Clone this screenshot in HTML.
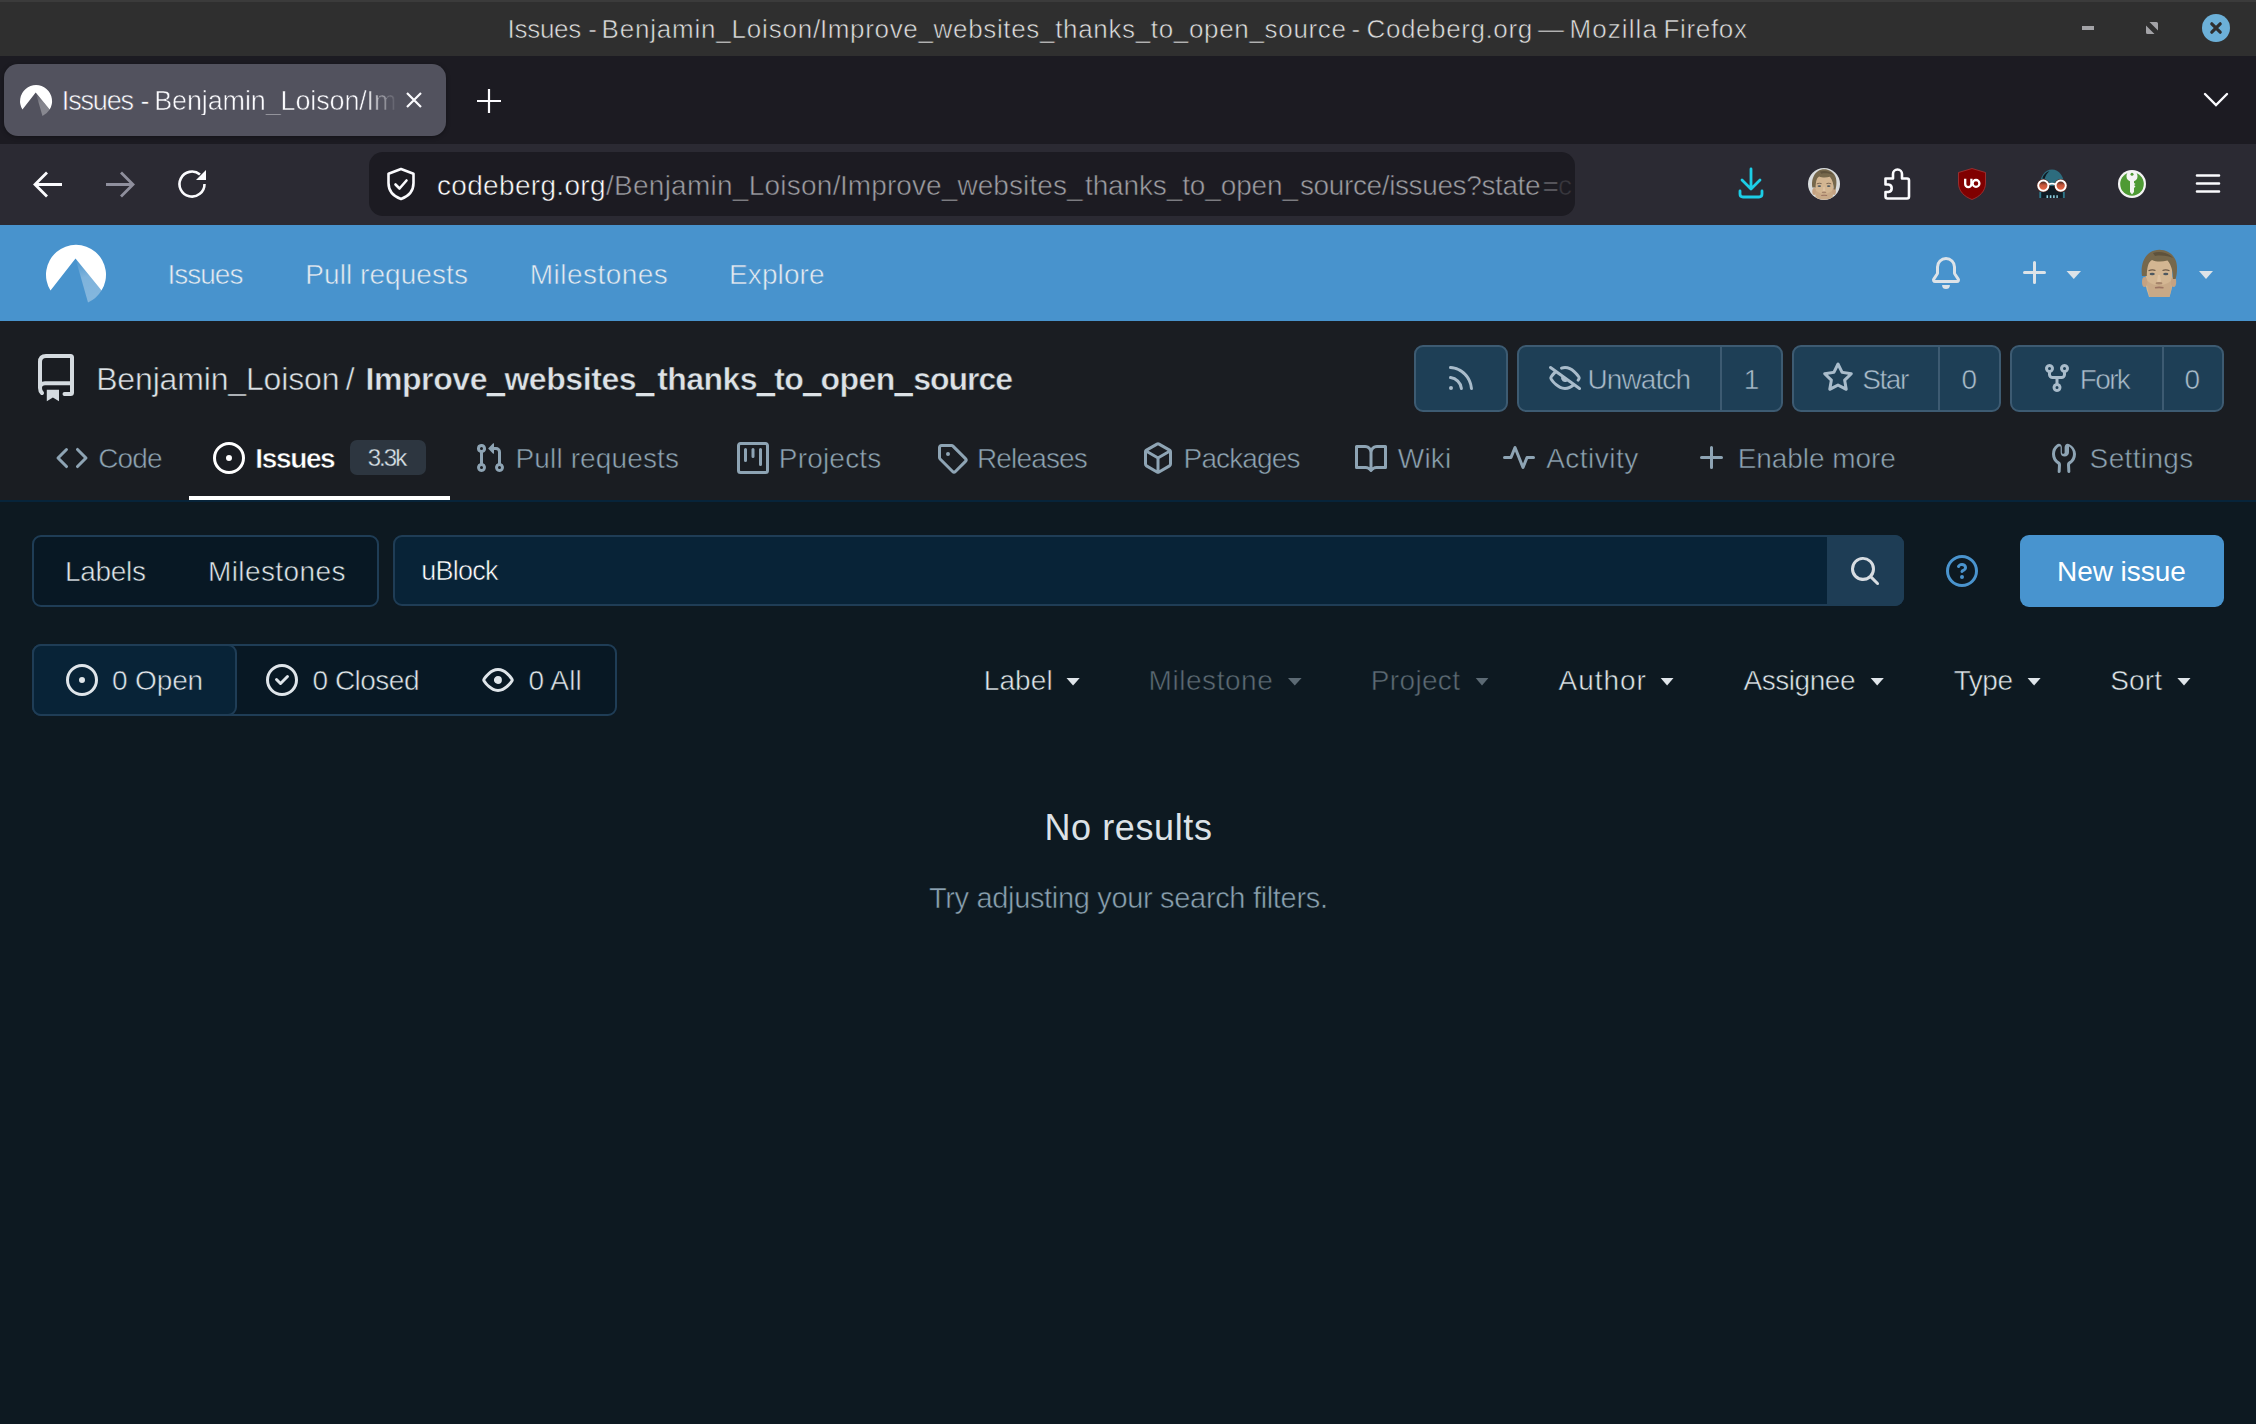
<!DOCTYPE html>
<html><head><meta charset="utf-8"><title>Issues - Benjamin_Loison/Improve_websites_thanks_to_open_source - Codeberg.org</title>
<style>
html,body{margin:0;padding:0;width:2256px;height:1424px;overflow:hidden;background:#0d1921;font-family:"Liberation Sans",sans-serif;}
.a{position:absolute;box-sizing:border-box;}
.t{position:absolute;white-space:pre;font-family:"Liberation Sans",sans-serif;}
svg{position:absolute;overflow:visible;}
</style></head><body>
<!-- window title bar -->
<div class="a" style="left:0;top:0;width:2256px;height:56px;background:#2f2f2f;border-top:2px solid #3b3b3b;"></div>
<div class="a" style="left:2082px;top:26px;width:12px;height:4px;background:#a3a3a7;"></div>
<!-- tab strip -->
<div class="a" style="left:0;top:56px;width:2256px;height:88px;background:#1c1b22;"></div>
<div class="a" style="left:4px;top:64px;width:442px;height:72px;background:#52525e;border-radius:14px;box-shadow:0 1px 4px rgba(0,0,0,.35);"></div>
<!-- nav toolbar -->
<div class="a" style="left:0;top:144px;width:2256px;height:81px;background:#2b2a33;"></div>
<div class="a" style="left:369px;top:152px;width:1206px;height:64px;background:#1c1b22;border-radius:14px;"></div>
<!-- codeberg navbar -->
<div class="a" style="left:0;top:225px;width:2256px;height:96px;background:#4893cd;"></div>
<!-- repo header -->
<div class="a" style="left:0;top:321px;width:2256px;height:181px;background:#1a1d22;border-bottom:2px solid #07243a;"></div>
<!-- buttons -->
<div class="a" style="left:1414px;top:345px;width:94px;height:67px;background:#1e3f56;border:2px solid #3d5b72;border-radius:9px;"></div>
<div class="a" style="left:1517px;top:345px;width:266px;height:67px;background:#1e3f56;border:2px solid #3d5b72;border-radius:9px;"></div>
<div class="a" style="left:1720px;top:347px;width:2px;height:63px;background:#3d5b72;"></div>
<div class="a" style="left:1792px;top:345px;width:209px;height:67px;background:#1e3f56;border:2px solid #3d5b72;border-radius:9px;"></div>
<div class="a" style="left:1938px;top:347px;width:2px;height:63px;background:#3d5b72;"></div>
<div class="a" style="left:2010px;top:345px;width:214px;height:67px;background:#1e3f56;border:2px solid #3d5b72;border-radius:9px;"></div>
<div class="a" style="left:2162px;top:347px;width:2px;height:63px;background:#3d5b72;"></div>
<!-- tab badge + underline -->
<div class="a" style="left:350px;top:440px;width:76px;height:35px;background:#2d3640;border-radius:7px;"></div>
<div class="a" style="left:189px;top:496px;width:261px;height:4px;background:#ffffff;"></div>
<!-- labels/milestones group -->
<div class="a" style="left:32px;top:535px;width:347px;height:72px;background:#081824;border:2px solid #1f3d56;border-radius:9px;"></div>
<!-- search -->
<div class="a" style="left:393px;top:535px;width:1511px;height:71px;background:#082337;border:2px solid #1f3d56;border-radius:9px;"></div>
<div class="a" style="left:1827px;top:535px;width:77px;height:71px;background:#1e3d55;border-radius:0 9px 9px 0;"></div>
<!-- new issue -->
<div class="a" style="left:2020px;top:535px;width:204px;height:72px;background:#4894cf;border-radius:9px;"></div>
<!-- state group -->
<div class="a" style="left:32px;top:644px;width:585px;height:72px;background:#081824;border:2px solid #1f3d56;border-radius:9px;"></div>
<div class="a" style="left:32px;top:644px;width:205px;height:72px;background:#082337;border:2px solid #1f3d56;border-radius:9px;"></div>
<svg style="left:0;top:0" width="2256" height="1424" viewBox="0 0 2256 1424"><path fill="#a3a3a7" d="M2149.5,22 H2156.5 Q2158,22 2158,23.5 V30.5 Z M2146,25.5 L2154.5,34 H2147.5 Q2146,34 2146,32.5 Z"/><circle cx="2216" cy="28" r="14" fill="#6cb0d8"/><path stroke="#2f2f2f" stroke-width="3.2" stroke-linecap="round" d="M2211.8,23.8 L2220.2,32.2 M2220.2,23.8 L2211.8,32.2"/><defs><linearGradient id="wg1" gradientUnits="userSpaceOnUse" x1="35.70" y1="92.47" x2="42.46" y2="115.88"><stop offset="0" stop-color="#ffffff" stop-opacity="0"/><stop offset=".45" stop-color="#ffffff" stop-opacity="0.28800000000000003"/><stop offset="1" stop-color="#ffffff" stop-opacity="0.32"/></linearGradient></defs><path fill="#ffffff" d="M22.46,109.53 L35.70,92.47 L49.66,109.53 A16 16 0 1 0 22.46,109.53 Z"/><path fill="url(#wg1)" d="M35.70,92.47 L49.66,109.53 A16 16 0 0 1 42.46,115.88 Z"/><path stroke="#fbfbfe" stroke-width="2.2" stroke-linecap="butt" d="M407,93 L421,107 M421,93 L407,107"/><path stroke="#fbfbfe" stroke-width="2.2" d="M477,101 H501 M489,89 V113"/><path fill="none" stroke="#fbfbfe" stroke-width="2.4" stroke-linecap="round" d="M2205,94 L2216,105 L2227,94"/><path fill="none" stroke="#fbfbfe" stroke-width="2.8" d="M35,184.5 H62 M47,172.5 L35,184.5 L47,196.5"/><path fill="none" stroke="#8f8f9d" stroke-width="2.8" d="M106,184.5 H133 M121,172.5 L133,184.5 L121,196.5"/><path fill="none" stroke="#fbfbfe" stroke-width="2.6" d="M204.5,184 A12.5 12.5 0 1 1 200,174.5"/><path fill="#fbfbfe" d="M206,170 V180 H196 Z"/><path fill="none" stroke="#fbfbfe" stroke-width="2.6" stroke-linejoin="round" d="M401,169 L413.5,173.8 V183 C413.5,191.5 408,196.5 401,199 C394,196.5 388.5,191.5 388.5,183 V173.8 Z"/><path fill="none" stroke="#fbfbfe" stroke-width="2.6" stroke-linecap="round" stroke-linejoin="round" d="M395.5,184.5 L399.5,188.5 L406.5,180.5"/><path fill="none" stroke="#1ccde6" stroke-width="2.8" stroke-linecap="round" stroke-linejoin="round" d="M1751,169 V189 M1742,180 L1751,189 L1760,180 M1740,191 V194 Q1740,197 1743,197 H1759 Q1762,197 1762,194 V191"/><path fill="none" stroke="#fbfbfe" stroke-width="2.6" stroke-linejoin="round" d="M1885.5,178.5 H1893 V174 A4.5 4.5 0 0 1 1902,174 V178.5 H1907 Q1909,178.5 1909,180.5 V196.5 Q1909,198.5 1907,198.5 H1887.5 Q1885.5,198.5 1885.5,196.5 V192 H1888.5 A3.8 3.8 0 0 0 1888.5,184.5 H1885.5 Z"/><path fill="#800000" stroke="#a33" stroke-width="0.8" d="M1972,168.5 L1985.5,172.5 V183 C1985.5,191 1980,196.5 1972,199.5 C1964,196.5 1958.5,191 1958.5,183 V172.5 Z"/><path fill="none" stroke="#fff" stroke-width="2.3" d="M1965.2,178.8 V184 A3.1 3.1 0 0 0 1971.4,184 V178.8"/><circle cx="1976" cy="183.4" r="3.4" fill="none" stroke="#fff" stroke-width="2.3"/><defs><linearGradient id="lens" x1="0" y1="0" x2="0" y2="1"><stop offset="0" stop-color="#2a1a18"/><stop offset=".45" stop-color="#c4553a"/><stop offset="1" stop-color="#ec6a48"/></linearGradient></defs><path fill="#2d6c7e" d="M2039.3,190 C2039.3,176 2045,169.6 2052,169.6 C2059,169.6 2064.8,176 2064.8,190 Z"/><path fill="#0e1a22" d="M2042.3,178.5 C2043.5,174.5 2046,172 2049.5,171 C2047,173.2 2045.5,175.8 2044.5,179 Z"/><path fill="#101c25" d="M2041,186 H2063 V198 H2041 Z"/><path fill="#2f7689" d="M2039.3,191.8 H2041.2 V198 H2039.3 Z M2062.9,191.8 H2064.8 V198 H2062.9 Z"/><circle cx="2043.3" cy="185.6" r="6.6" fill="#5b2418"/><circle cx="2060.7" cy="185.6" r="6.6" fill="#5b2418"/><circle cx="2043.3" cy="185.6" r="5.1" fill="url(#lens)" stroke="#fff" stroke-width="1.9"/><circle cx="2060.7" cy="185.6" r="5.1" fill="url(#lens)" stroke="#fff" stroke-width="1.9"/><path stroke="#fff" stroke-width="1.7" d="M2048.6,184.3 Q2052,182.8 2055.4,184.3"/><path stroke="#8fd0e0" stroke-width="2.6" d="M2046.5,196.6 H2057.8" stroke-dasharray="1.6 1.7"/><circle cx="2132" cy="184" r="14" fill="#f4f4f4"/><circle cx="2132" cy="184" r="11.8" fill="#4e9a34"/><path fill="#f4f4f4" d="M2126.5,176.5 C2126.5,172.5 2129,170.8 2132,170.8 C2135,170.8 2137.5,172.5 2137.5,176.5 C2137.5,179 2136,180.5 2134,181.3 V183 L2135.5,184 L2134,185 L2135.5,186.5 L2134,188 V192 L2132,194.5 L2130,192 V181.3 C2128,180.5 2126.5,179 2126.5,176.5 Z"/><circle cx="2132" cy="174.2" r="1.5" fill="#4e9a34"/><path stroke="#fbfbfe" stroke-width="2.6" stroke-linecap="round" d="M2197,175.5 H2219 M2197,183.5 H2219 M2197,191.5 H2219"/><defs><linearGradient id="wg2" gradientUnits="userSpaceOnUse" x1="75.50" y1="258.61" x2="88.00" y2="302.50"><stop offset="0" stop-color="#ffffff" stop-opacity="0"/><stop offset=".45" stop-color="#ffffff" stop-opacity="0.29700000000000004"/><stop offset="1" stop-color="#ffffff" stop-opacity="0.33"/></linearGradient></defs><path fill="#ffffff" d="M50.50,290.59 L75.50,258.61 L101.50,290.59 A30 30 0 1 0 50.50,290.59 Z"/><path fill="url(#wg2)" d="M75.50,258.61 L101.50,290.59 A30 30 0 0 1 88.00,302.50 Z"/><polygon fill="#dde3e8" points="2066.5,271 2081,271 2073.75,279"/><polygon fill="#dde3e8" points="2199,271 2213,271 2206,279"/><path fill="none" stroke="#d5dbe0" stroke-width="4" stroke-linecap="round" stroke-linejoin="round" d="M42,393 C40.6,391.6 40,390 40,388 V362 Q40,356 46,356 H70.5 Q72,356 72,357.5 V392.5 Q72,394 70.5,394 H64.5 M40,388 Q40,383.3 45,383.3 H72"/><path fill="#d5dbe0" d="M46.8,389.8 H59 V401.2 L52.9,397.4 L46.8,401.2 Z"/><polygon fill="#dfe5ea" points="1066.5,678 1079.7,678 1073.1,685.5"/><polygon fill="#5c6a74" points="1288,678 1301.6,678 1294.8,685.5"/><polygon fill="#5c6a74" points="1475.7,678 1488.4,678 1482,685.5"/><polygon fill="#dfe5ea" points="1660.7,678 1673.5,678 1667.1,685.5"/><polygon fill="#dfe5ea" points="1870.7,678 1883.8,678 1877.2,685.5"/><polygon fill="#dfe5ea" points="2027.6,678 2040.6,678 2034.1,685.5"/><polygon fill="#dfe5ea" points="2177.4,678 2190.5,678 2184,685.5"/></svg>
<svg style="left:1808px;top:168px" width="32" height="32" viewBox="0 0 32 32"><defs><clipPath id="avc"><circle cx="16" cy="16" r="15.6"/></clipPath></defs><circle cx="16" cy="16" r="16" fill="#d9dcdd"/><g clip-path="url(#avc)"><g transform="translate(3.6,0.8) scale(0.69)"><path d="M5,14 C5,9 10,7 18,7 C27,7 31,10 31,15 L31.5,33 C31.5,39 29.5,44 28.5,48 L8,48 C7,44 4.5,39 4.5,33 Z" fill="#d3b692"/><path d="M5,30 C6,38 8,44 8.5,48 L28.5,48 C29.5,44 31,38 31.5,30 C28,34 24,36 18,36 C12,36 8,34 5,30 Z" fill="#c6a684" opacity=".8"/><ellipse cx="3.6" cy="33" rx="2.6" ry="5" fill="#c4a282"/><ellipse cx="32.6" cy="33" rx="2.6" ry="5" fill="#c4a282"/><path d="M1,27 C-0.5,17 2.5,8 9,3.5 C13,0.8 18,0 23,1.2 C31,3.5 36.5,10 36,20 C36,24 35.5,27 34.6,30 L32,30 C32,23 30.5,16 26.5,11.5 C21,13 15,13 11,11 C7,13 6,19 5.8,27 Z" fill="#76684c"/><path d="M12,4 C18,2 27,3 32,9 C28,7 21,6 14,7 Z" fill="#5e523c"/><path d="M7.5,21.8 Q11,20.2 14.5,21.5 M21.5,21.5 Q25,20.2 28.5,21.8" stroke="#6d5a48" stroke-width="1.2" fill="none"/><ellipse cx="11.2" cy="25" rx="2.6" ry="1.3" fill="#4d5860"/><ellipse cx="24.8" cy="25" rx="2.6" ry="1.3" fill="#4d5860"/><path d="M17,26 L16,32.5 Q18,33.5 20,32.5 L19,26 Z" fill="#e2c8a6" opacity=".7"/><ellipse cx="18" cy="34.2" rx="3.4" ry="1.2" fill="#8d6c56" opacity=".65"/><path d="M14,38.8 Q18,38 22.5,38.8" stroke="#9c7462" stroke-width="1.6" fill="none"/></g></g></svg>
<svg style="left:2141px;top:249px" width="36" height="48" viewBox="0 0 36 48"><path d="M5,14 C5,9 10,7 18,7 C27,7 31,10 31,15 L31.5,33 C31.5,39 29.5,44 28.5,48 L8,48 C7,44 4.5,39 4.5,33 Z" fill="#d3b692"/><path d="M5,30 C6,38 8,44 8.5,48 L28.5,48 C29.5,44 31,38 31.5,30 C28,34 24,36 18,36 C12,36 8,34 5,30 Z" fill="#c6a684" opacity=".8"/><ellipse cx="3.6" cy="33" rx="2.6" ry="5" fill="#c4a282"/><ellipse cx="32.6" cy="33" rx="2.6" ry="5" fill="#c4a282"/><path d="M1,27 C-0.5,17 2.5,8 9,3.5 C13,0.8 18,0 23,1.2 C31,3.5 36.5,10 36,20 C36,24 35.5,27 34.6,30 L32,30 C32,23 30.5,16 26.5,11.5 C21,13 15,13 11,11 C7,13 6,19 5.8,27 Z" fill="#76684c"/><path d="M12,4 C18,2 27,3 32,9 C28,7 21,6 14,7 Z" fill="#5e523c"/><path d="M7.5,21.8 Q11,20.2 14.5,21.5 M21.5,21.5 Q25,20.2 28.5,21.8" stroke="#6d5a48" stroke-width="1.2" fill="none"/><ellipse cx="11.2" cy="25" rx="2.6" ry="1.3" fill="#4d5860"/><ellipse cx="24.8" cy="25" rx="2.6" ry="1.3" fill="#4d5860"/><path d="M17,26 L16,32.5 Q18,33.5 20,32.5 L19,26 Z" fill="#e2c8a6" opacity=".7"/><ellipse cx="18" cy="34.2" rx="3.4" ry="1.2" fill="#8d6c56" opacity=".65"/><path d="M14,38.8 Q18,38 22.5,38.8" stroke="#9c7462" stroke-width="1.6" fill="none"/></svg>
<svg style="left:1930px;top:257px" width="32" height="32" viewBox="0 0 16 16"><path fill="#dde3e8" d="M8 16a2 2 0 0 0 1.985-1.75c.017-.137-.097-.25-.235-.25h-3.5c-.138 0-.252.113-.235.25A2 2 0 0 0 8 16ZM3 5a5 5 0 0 1 10 0v2.947c0 .05.015.098.042.139l1.703 2.555A1.519 1.519 0 0 1 13.482 13H2.518a1.516 1.516 0 0 1-1.263-2.36l1.703-2.554A.255.255 0 0 0 3 7.947Zm5-3.5A3.5 3.5 0 0 0 4.5 5v2.947c0 .346-.102.683-.294.97l-1.703 2.556a.017.017 0 0 0-.003.01l.001.006c0 .002.002.004.004.006l.006.004.007.001h10.964l.007-.001.006-.004.004-.006.001-.007a.017.017 0 0 0-.003-.01l-1.703-2.554a1.745 1.745 0 0 1-.294-.97V5A3.5 3.5 0 0 0 8 1.5Z"/></svg>
<svg style="left:2019px;top:257px" width="32" height="32" viewBox="0 0 16 16"><path fill="#dde3e8" d="M7.75 2a.75.75 0 0 1 .75.75V7h4.25a.75.75 0 0 1 0 1.5H8.5v4.25a.75.75 0 0 1-1.5 0V8.5H2.75a.75.75 0 0 1 0-1.5H7V2.75A.75.75 0 0 1 7.75 2Z"/></svg>
<svg style="left:1445px;top:362px" width="32" height="32" viewBox="0 0 16 16"><path fill="#a9bccb" d="M2.002 2.725a.75.75 0 0 1 .797-.699C8.79 2.42 13.58 7.21 13.974 13.201a.75.75 0 0 1-1.497.098 10.502 10.502 0 0 0-9.776-9.776.747.747 0 0 1-.7-.798ZM2.84 7.05h-.002a7.002 7.002 0 0 1 6.113 6.111.75.75 0 0 1-1.49.178 5.503 5.503 0 0 0-4.8-4.8.75.75 0 0 1 .179-1.489ZM2 13a1 1 0 1 1 2 0 1 1 0 0 1-2 0Z"/></svg>
<svg style="left:1549px;top:362px" width="32" height="32" viewBox="0 0 16 16"><path fill="#a9bccb" d="M.143 2.31a.75.75 0 0 1 1.047-.167l14.5 10.5a.75.75 0 1 1-.88 1.214l-2.248-1.628C11.346 13.19 9.792 14 8 14c-1.981 0-3.67-.992-4.933-2.078C1.797 10.832.88 9.577.43 8.9a1.619 1.619 0 0 1 0-1.797c.353-.533.995-1.42 1.868-2.305L.31 3.357A.75.75 0 0 1 .143 2.31Zm1.536 5.622A.12.12 0 0 0 1.657 8c0 .021.006.045.022.068.412.621 1.242 1.75 2.366 2.717C5.175 11.758 6.527 12.5 8 12.5c1.195 0 2.31-.488 3.29-1.191L9.063 9.695A2 2 0 0 1 6.058 7.52L3.529 5.688a14.207 14.207 0 0 0-1.85 2.244ZM8 3.5c-.516 0-1.017.09-1.499.251a.75.75 0 1 1-.473-1.423A6.207 6.207 0 0 1 8 2c1.981 0 3.67.992 4.933 2.078 1.27 1.091 2.187 2.345 2.637 3.023a1.62 1.62 0 0 1 0 1.798c-.11.166-.248.365-.41.587a.75.75 0 1 1-1.21-.887c.148-.201.272-.382.371-.53a.119.119 0 0 0 0-.137c-.412-.621-1.242-1.75-2.366-2.717C10.825 4.242 9.473 3.5 8 3.5Z"/></svg>
<svg style="left:1822px;top:362px" width="32" height="32" viewBox="0 0 16 16"><path fill="#a9bccb" d="M8 .25a.75.75 0 0 1 .673.418l1.882 3.815 4.21.612a.75.75 0 0 1 .416 1.279l-3.046 2.97.719 4.192a.751.751 0 0 1-1.088.791L8 12.347l-3.766 1.98a.75.75 0 0 1-1.088-.79l.72-4.194L.818 6.374a.75.75 0 0 1 .416-1.28l4.21-.611L7.327.668A.75.75 0 0 1 8 .25Zm0 2.445L6.615 5.5a.75.75 0 0 1-.564.41l-3.097.45 2.24 2.184a.75.75 0 0 1 .216.664l-.528 3.084 2.769-1.456a.75.75 0 0 1 .698 0l2.77 1.456-.53-3.084a.75.75 0 0 1 .216-.664l2.24-2.183-3.096-.45a.75.75 0 0 1-.564-.41L8 2.694Z"/></svg>
<svg style="left:2041px;top:362px" width="32" height="32" viewBox="0 0 16 16"><path fill="#a9bccb" d="M5 5.372v.878c0 .414.336.75.75.75h4.5a.75.75 0 0 0 .75-.75v-.878a2.25 2.25 0 1 1 1.5 0v.878a2.25 2.25 0 0 1-2.25 2.25h-1.5v2.128a2.251 2.251 0 1 1-1.5 0V8.5h-1.5A2.25 2.25 0 0 1 3.5 6.25v-.878a2.25 2.25 0 1 1 1.5 0ZM5 3.25a.75.75 0 1 0-1.5 0 .75.75 0 0 0 1.5 0Zm6.75.75a.75.75 0 1 0 0-1.5.75.75 0 0 0 0 1.5Zm-3 8.75a.75.75 0 1 0-1.5 0 .75.75 0 0 0 1.5 0Z"/></svg>
<svg style="left:56px;top:442px" width="32" height="32" viewBox="0 0 16 16"><path fill="#8ea4b4" d="M4.72 3.22a.75.75 0 0 1 1.06 1.06L2.06 8l3.72 3.72a.75.75 0 1 1-1.06 1.06L.47 8.53a.75.75 0 0 1 0-1.06Zm6.56 0a.75.75 0 1 0-1.06 1.06L13.94 8l-3.72 3.72a.75.75 0 1 0 1.06 1.06l4.25-4.25a.75.75 0 0 0 0-1.06Z"/></svg>
<svg style="left:213px;top:442px" width="32" height="32" viewBox="0 0 16 16"><path fill="#ffffff" d="M8 9.5a1.5 1.5 0 1 0 0-3 1.5 1.5 0 0 0 0 3Z M8 0a8 8 0 1 1 0 16A8 8 0 0 1 8 0ZM1.5 8a6.5 6.5 0 1 0 13 0 6.5 6.5 0 0 0-13 0Z"/></svg>
<svg style="left:474px;top:442px" width="32" height="32" viewBox="0 0 16 16"><path fill="#8ea4b4" d="M1.5 3.25a2.25 2.25 0 1 1 3 2.122v5.256a2.251 2.251 0 1 1-1.5 0V5.372A2.25 2.25 0 0 1 1.5 3.25Zm5.677-.177L9.573.677A.25.25 0 0 1 10 .854V2.5h1A2.5 2.5 0 0 1 13.5 5v5.628a2.251 2.251 0 1 1-1.5 0V5a1 1 0 0 0-1-1h-1v1.646a.25.25 0 0 1-.427.177L7.177 3.427a.25.25 0 0 1 0-.354ZM3.75 2.5a.75.75 0 1 0 0 1.5.75.75 0 0 0 0-1.5Zm0 9.5a.75.75 0 1 0 0 1.5.75.75 0 0 0 0-1.5Zm8.25.75a.75.75 0 1 0 1.5 0 .75.75 0 0 0-1.5 0Z"/></svg>
<svg style="left:737px;top:442px" width="32" height="32" viewBox="0 0 16 16"><path fill="#8ea4b4" d="M1.75 0h12.5C15.216 0 16 .784 16 1.75v12.5A1.75 1.75 0 0 1 14.25 16H1.75A1.75 1.75 0 0 1 0 14.25V1.75C0 .784.784 0 1.75 0ZM1.5 1.75v12.5c0 .138.112.25.25.25h12.5a.25.25 0 0 0 .25-.25V1.75a.25.25 0 0 0-.25-.25H1.75a.25.25 0 0 0-.25.25ZM11.75 3a.75.75 0 0 1 .75.75v7.5a.75.75 0 0 1-1.5 0v-7.5a.75.75 0 0 1 .75-.75Zm-8.25.75a.75.75 0 0 1 1.5 0v5.5a.75.75 0 0 1-1.5 0ZM8 3a.75.75 0 0 1 .75.75v3.5a.75.75 0 0 1-1.5 0v-3.5A.75.75 0 0 1 8 3Z"/></svg>
<svg style="left:936px;top:441.5px" width="32" height="32" viewBox="0 0 16 16"><path fill="#8ea4b4" d="M1 7.775V2.75C1 1.784 1.784 1 2.75 1h5.025c.464 0 .91.184 1.238.513l6.25 6.25a1.75 1.75 0 0 1 0 2.474l-5.026 5.026a1.75 1.75 0 0 1-2.474 0l-6.25-6.25A1.752 1.752 0 0 1 1 7.775Zm1.5 0c0 .066.026.13.073.177l6.25 6.25a.25.25 0 0 0 .354 0l5.025-5.025a.25.25 0 0 0 0-.354l-6.25-6.25a.25.25 0 0 0-.177-.073H2.75a.25.25 0 0 0-.25.25ZM6 5a1 1 0 1 1 0 2 1 1 0 0 1 0-2Z"/></svg>
<svg style="left:1142px;top:441.5px" width="32" height="32" viewBox="0 0 16 16"><path fill="#8ea4b4" d="m8.878.392 5.25 3.045c.54.314.872.89.872 1.514v6.098a1.75 1.75 0 0 1-.872 1.514l-5.25 3.045a1.75 1.75 0 0 1-1.756 0l-5.25-3.045A1.75 1.75 0 0 1 1 11.049V4.951c0-.624.332-1.201.872-1.514L7.122.392a1.75 1.75 0 0 1 1.756 0ZM7.875 1.69l-4.63 2.685L8 7.133l4.755-2.758-4.63-2.685a.248.248 0 0 0-.25 0ZM2.5 5.677v5.372c0 .09.047.171.125.216l4.625 2.683V8.432Zm6.25 8.271 4.625-2.683a.25.25 0 0 0 .125-.216V5.677L8.75 8.432Z"/></svg>
<svg style="left:1355px;top:442.5px" width="32" height="32" viewBox="0 0 16 16"><path fill="#8ea4b4" d="M0 1.75A.75.75 0 0 1 .75 1h4.253c1.227 0 2.317.59 3 1.501A3.743 3.743 0 0 1 11.006 1h4.245a.75.75 0 0 1 .75.75v10.5a.75.75 0 0 1-.75.75h-4.507a2.25 2.25 0 0 0-1.591.659l-.622.621a.75.75 0 0 1-1.06 0l-.622-.621A2.25 2.25 0 0 0 5.258 13H.75a.75.75 0 0 1-.75-.75Zm7.251 10.324.004-5.073-.002-2.253A2.25 2.25 0 0 0 5.003 2.5H1.5v9h3.757a3.75 3.75 0 0 1 1.994.574ZM8.755 4.75l-.004 7.322a3.752 3.752 0 0 1 1.992-.572H14.5v-9h-3.495a2.25 2.25 0 0 0-2.25 2.25Z"/></svg>
<svg style="left:1503px;top:441.7px" width="32" height="32" viewBox="0 0 16 16"><path fill="#8ea4b4" d="M6 2c.306 0 .582.187.696.471L10 10.731l1.304-3.26A.751.751 0 0 1 12 7h3.25a.75.75 0 0 1 0 1.5h-2.742l-1.812 4.528a.751.751 0 0 1-1.392 0L6 4.77 4.696 8.03A.75.75 0 0 1 4 8.5H.75a.75.75 0 0 1 0-1.5h2.742l1.812-4.529A.751.751 0 0 1 6 2Z"/></svg>
<svg style="left:1696px;top:441.7px" width="32" height="32" viewBox="0 0 16 16"><path fill="#8ea4b4" d="M7.75 2a.75.75 0 0 1 .75.75V7h4.25a.75.75 0 0 1 0 1.5H8.5v4.25a.75.75 0 0 1-1.5 0V8.5H2.75a.75.75 0 0 1 0-1.5H7V2.75A.75.75 0 0 1 7.75 2Z"/></svg>
<svg style="left:2048px;top:441.5px" width="32" height="32" viewBox="0 0 16 16"><path fill="#8ea4b4" d="M5.433 2.304A4.492 4.492 0 0 0 3.5 6c0 1.598.832 3.002 2.09 3.802.518.328.929.923.902 1.64v.008l-.164 3.337a.75.75 0 1 1-1.498-.073l.163-3.33c.002-.085-.05-.216-.207-.316A5.996 5.996 0 0 1 2 6a5.993 5.993 0 0 1 2.567-4.92 1.482 1.482 0 0 1 .806-.26c.447-.014.843.215 1.11.537.281.34.445.8.445 1.307v2.585c0 .36.318.63.698.63.38 0 .682-.27.682-.63V2.665c0-.507.164-.966.445-1.307.267-.322.663-.551 1.11-.537.286.01.559.097.806.26A5.993 5.993 0 0 1 14 6a5.996 5.996 0 0 1-2.786 5.068c-.157.1-.209.23-.207.315l.163 3.33a.752.752 0 0 1-1.094.714.75.75 0 0 1-.404-.64l-.164-3.338v-.008c-.027-.717.384-1.312.902-1.64A4.495 4.495 0 0 0 12.5 6a4.492 4.492 0 0 0-1.933-3.696c-.024.017-.067.067-.067.196v2.585A2.132 2.132 0 0 1 8.369 7.216a2.132 2.132 0 0 1-2.063-2.131V2.5c0-.129-.043-.179-.067-.196Z"/></svg>
<svg style="left:1849px;top:555px" width="32" height="32" viewBox="0 0 16 16"><path fill="#d8dde2" d="M10.68 11.74a6 6 0 0 1-7.922-8.982 6 6 0 0 1 8.982 7.922l3.04 3.04a.749.749 0 0 1-.326 1.275.749.749 0 0 1-.734-.215ZM11.5 7a4.499 4.499 0 1 0-8.997 0A4.499 4.499 0 0 0 11.5 7Z"/></svg>
<svg style="left:1946px;top:555px" width="32" height="32" viewBox="0 0 16 16"><path fill="#4a94ce" d="M0 8a8 8 0 1 1 16 0A8 8 0 0 1 0 8Zm8-6.5a6.5 6.5 0 1 0 0 13 6.5 6.5 0 0 0 0-13ZM6.92 6.085h.001a.749.749 0 1 1-1.342-.67c.169-.339.436-.701.849-.977C6.845 4.16 7.369 4 8 4a2.756 2.756 0 0 1 1.637.525c.503.377.863.965.863 1.725 0 .448-.115.83-.329 1.15-.205.307-.47.513-.692.662-.109.072-.22.138-.313.195l-.006.004a6.24 6.24 0 0 0-.26.16.952.952 0 0 0-.276.245.75.75 0 0 1-1.248-.832c.184-.264.42-.489.692-.661.103-.067.207-.132.313-.195l.007-.004c.1-.061.182-.11.258-.161a.969.969 0 0 0 .277-.245C8.96 6.514 9 6.427 9 6.25a.612.612 0 0 0-.262-.525A1.27 1.27 0 0 0 8 5.5c-.369 0-.595.09-.74.187a1.01 1.01 0 0 0-.34.398ZM9 11a1 1 0 1 1-2 0 1 1 0 0 1 2 0Z"/></svg>
<svg style="left:66px;top:664px" width="32" height="32" viewBox="0 0 16 16"><path fill="#dfe5ea" d="M8 9.5a1.5 1.5 0 1 0 0-3 1.5 1.5 0 0 0 0 3Z M8 0a8 8 0 1 1 0 16A8 8 0 0 1 8 0ZM1.5 8a6.5 6.5 0 1 0 13 0 6.5 6.5 0 0 0-13 0Z"/></svg>
<svg style="left:266px;top:664px" width="32" height="32" viewBox="0 0 16 16"><path fill="#dfe5ea" d="M11.28 6.78a.75.75 0 0 0-1.06-1.06L7.25 8.69 5.78 7.22a.75.75 0 0 0-1.06 1.06l2 2a.75.75 0 0 0 1.06 0l3.5-3.5Z M16 8A8 8 0 1 1 0 8a8 8 0 0 1 16 0Zm-1.5 0a6.5 6.5 0 1 0-13 0 6.5 6.5 0 0 0 13 0Z"/></svg>
<svg style="left:482px;top:664px" width="32" height="32" viewBox="0 0 16 16"><path fill="#dfe5ea" d="M8 2c1.981 0 3.671.992 4.933 2.078 1.27 1.091 2.187 2.345 2.637 3.023a1.62 1.62 0 0 1 0 1.798c-.45.678-1.367 1.932-2.637 3.023C11.67 13.008 9.981 14 8 14c-1.981 0-3.671-.992-4.933-2.078C1.797 10.83.88 9.576.43 8.898a1.62 1.62 0 0 1 0-1.798c.45-.677 1.367-1.931 2.637-3.022C4.33 2.992 6.019 2 8 2ZM1.679 7.932a.12.12 0 0 0 0 .136c.411.622 1.241 1.75 2.366 2.717C5.176 11.758 6.527 12.5 8 12.5c1.473 0 2.825-.742 3.955-1.715 1.124-.967 1.954-2.096 2.366-2.717a.12.12 0 0 0 0-.136c-.412-.621-1.242-1.75-2.366-2.717C10.824 4.242 9.473 3.5 8 3.5c-1.473 0-2.825.742-3.955 1.715-1.124.967-1.954 2.096-2.366 2.717ZM8 10a2 2 0 1 1-.001-3.999A2 2 0 0 1 8 10Z"/></svg>
<div class="t" style="left:507.50px;top:16.00px;font-size:26px;line-height:26px;letter-spacing:-0.269px;color:#dedede;font-weight:400;-webkit-text-stroke:0.55px #2f2f2f;">Issues</div>
<div class="t" style="left:588.30px;top:16.00px;font-size:26px;line-height:26px;letter-spacing:0.000px;color:#dedede;font-weight:400;-webkit-text-stroke:0.55px #2f2f2f;">-</div>
<div class="t" style="left:601.50px;top:16.00px;font-size:26px;line-height:26px;letter-spacing:0.802px;color:#dedede;font-weight:400;-webkit-text-stroke:0.55px #2f2f2f;">Benjamin_Loison/</div>
<div class="t" style="left:819.90px;top:16.00px;font-size:26px;line-height:26px;letter-spacing:0.663px;color:#dedede;font-weight:400;-webkit-text-stroke:0.55px #2f2f2f;">Improve_websites_thanks_to_open_source</div>
<div class="t" style="left:1351.40px;top:16.00px;font-size:26px;line-height:26px;letter-spacing:0.000px;color:#dedede;font-weight:400;-webkit-text-stroke:0.55px #2f2f2f;">-</div>
<div class="t" style="left:1366.50px;top:16.00px;font-size:26px;line-height:26px;letter-spacing:0.606px;color:#dedede;font-weight:400;-webkit-text-stroke:0.55px #2f2f2f;">Codeberg.org</div>
<div class="t" style="left:1538.00px;top:16.00px;font-size:26px;line-height:26px;letter-spacing:0.000px;color:#dedede;font-weight:400;-webkit-text-stroke:0.55px #2f2f2f;">—</div>
<div class="t" style="left:1569.50px;top:16.00px;font-size:26px;line-height:26px;letter-spacing:1.075px;color:#dedede;font-weight:400;-webkit-text-stroke:0.55px #2f2f2f;">Mozilla</div>
<div class="t" style="left:1663.40px;top:16.00px;font-size:26px;line-height:26px;letter-spacing:0.690px;color:#dedede;font-weight:400;-webkit-text-stroke:0.55px #2f2f2f;">Firefox</div>
<div class="t" style="left:61.80px;top:88.00px;font-size:27px;line-height:27px;letter-spacing:-1.147px;color:#fbfbfe;font-weight:400;-webkit-text-stroke:0.55px #52525e;">Issues</div>
<div class="t" style="left:140.60px;top:88.00px;font-size:27px;line-height:27px;letter-spacing:0.000px;color:#fbfbfe;font-weight:400;-webkit-text-stroke:0.55px #52525e;">-</div>
<div class="t" style="left:154.20px;top:88.00px;font-size:27px;line-height:27px;letter-spacing:-0.138px;color:#fbfbfe;font-weight:400;-webkit-mask-image:linear-gradient(to right,#000 210px,rgba(0,0,0,.35) 232px,transparent 244px);-webkit-text-stroke:0.55px #52525e;">Benjamin_Loison/Im</div>
<div class="t" style="left:437.00px;top:171.50px;font-size:28px;line-height:28px;letter-spacing:0.324px;color:#fbfbfe;font-weight:400;-webkit-text-stroke:0.55px #1c1b22;">codeberg.org</div>
<div class="t" style="left:606.00px;top:171.50px;font-size:28px;line-height:28px;letter-spacing:0.257px;color:#9d9da3;font-weight:400;-webkit-text-stroke:0.55px #1c1b22;">/Benjamin_Loison/</div>
<div class="t" style="left:840.00px;top:171.50px;font-size:28px;line-height:28px;letter-spacing:0.084px;color:#9d9da3;font-weight:400;-webkit-text-stroke:0.55px #1c1b22;">Improve_websites_</div>
<div class="t" style="left:1085.00px;top:171.50px;font-size:28px;line-height:28px;letter-spacing:-0.127px;color:#9d9da3;font-weight:400;-webkit-text-stroke:0.55px #1c1b22;">thanks_to_open_</div>
<div class="t" style="left:1300.00px;top:171.50px;font-size:28px;line-height:28px;letter-spacing:-0.383px;color:#9d9da3;font-weight:400;-webkit-text-stroke:0.55px #1c1b22;">source/issues?state</div>
<div class="t" style="left:1542.50px;top:173.30px;font-size:28px;line-height:28px;letter-spacing:0.000px;color:rgba(157,157,163,.62);font-weight:400;-webkit-text-stroke:0.55px #1c1b22;">=</div>
<div class="t" style="left:1558.00px;top:171.50px;font-size:28px;line-height:28px;letter-spacing:0.000px;color:rgba(157,157,163,.22);font-weight:400;-webkit-text-stroke:0.55px #1c1b22;">c</div>
<div class="t" style="left:167.60px;top:261.00px;font-size:28px;line-height:28px;letter-spacing:-1.025px;color:#e4ebf1;font-weight:400;-webkit-text-stroke:0.55px #4893cd;">Issues</div>
<div class="t" style="left:305.30px;top:261.00px;font-size:28px;line-height:28px;letter-spacing:0.062px;color:#e4ebf1;font-weight:400;-webkit-text-stroke:0.55px #4893cd;">Pull requests</div>
<div class="t" style="left:529.80px;top:261.00px;font-size:28px;line-height:28px;letter-spacing:0.463px;color:#e4ebf1;font-weight:400;-webkit-text-stroke:0.55px #4893cd;">Milestones</div>
<div class="t" style="left:729.00px;top:261.00px;font-size:28px;line-height:28px;letter-spacing:0.106px;color:#e4ebf1;font-weight:400;-webkit-text-stroke:0.55px #4893cd;">Explore</div>
<div class="t" style="left:96.20px;top:363.00px;font-size:32px;line-height:32px;letter-spacing:-0.157px;color:#dde2e7;font-weight:400;-webkit-text-stroke:0.55px #1a1d22;">Benjamin_Loison</div>
<div class="t" style="left:345.70px;top:363.00px;font-size:32px;line-height:32px;letter-spacing:0.000px;color:#dde2e7;font-weight:400;-webkit-text-stroke:0.55px #1a1d22;">/</div>
<div class="t" style="left:365.50px;top:363.00px;font-size:32px;line-height:32px;letter-spacing:-0.422px;color:#dde2e7;font-weight:700;-webkit-text-stroke:0.5px #1a1d22;">Improve<span style="-webkit-text-stroke:0;text-shadow:0 1px 0 #dde2e7,0 2px 0 #dde2e7;position:relative;top:0px">_</span>websites<span style="-webkit-text-stroke:0;text-shadow:0 1px 0 #dde2e7,0 2px 0 #dde2e7;position:relative;top:0px">_</span></div>
<div class="t" style="left:657.20px;top:363.00px;font-size:32px;line-height:32px;letter-spacing:-0.555px;color:#dde2e7;font-weight:700;-webkit-text-stroke:0.5px #1a1d22;">thanks<span style="-webkit-text-stroke:0;text-shadow:0 1px 0 #dde2e7,0 2px 0 #dde2e7;position:relative;top:0px">_</span>to<span style="-webkit-text-stroke:0;text-shadow:0 1px 0 #dde2e7,0 2px 0 #dde2e7;position:relative;top:0px">_</span>open<span style="-webkit-text-stroke:0;text-shadow:0 1px 0 #dde2e7,0 2px 0 #dde2e7;position:relative;top:0px">_</span></div>
<div class="t" style="left:913.30px;top:363.00px;font-size:32px;line-height:32px;letter-spacing:-1.048px;color:#dde2e7;font-weight:700;-webkit-text-stroke:0.5px #1a1d22;">source</div>
<div class="t" style="left:1587.40px;top:365.50px;font-size:28px;line-height:28px;letter-spacing:-0.894px;color:#a9bccb;font-weight:400;-webkit-text-stroke:0.55px #1e3f56;">Unwatch</div>
<div class="t" style="left:1743.70px;top:365.50px;font-size:28px;line-height:28px;letter-spacing:0.000px;color:#a9bccb;font-weight:400;-webkit-text-stroke:0.55px #1e3f56;">1</div>
<div class="t" style="left:1862.20px;top:365.50px;font-size:28px;line-height:28px;letter-spacing:-1.442px;color:#a9bccb;font-weight:400;-webkit-text-stroke:0.55px #1e3f56;">Star</div>
<div class="t" style="left:1961.50px;top:365.50px;font-size:28px;line-height:28px;letter-spacing:0.000px;color:#a9bccb;font-weight:400;-webkit-text-stroke:0.55px #1e3f56;">0</div>
<div class="t" style="left:2079.80px;top:365.50px;font-size:28px;line-height:28px;letter-spacing:-1.667px;color:#a9bccb;font-weight:400;-webkit-text-stroke:0.55px #1e3f56;">Fork</div>
<div class="t" style="left:2184.40px;top:365.50px;font-size:28px;line-height:28px;letter-spacing:0.000px;color:#a9bccb;font-weight:400;-webkit-text-stroke:0.55px #1e3f56;">0</div>
<div class="t" style="left:98.20px;top:445.00px;font-size:28px;line-height:28px;letter-spacing:-0.855px;color:#8ea4b4;font-weight:400;-webkit-text-stroke:0.55px #1a1d22;">Code</div>
<div class="t" style="left:255.30px;top:445.00px;font-size:28px;line-height:28px;letter-spacing:-1.360px;color:#ffffff;font-weight:700;-webkit-text-stroke:0.5px #1a1d22;">Issues</div>
<div class="t" style="left:367.70px;top:446.00px;font-size:24px;line-height:24px;letter-spacing:-1.921px;color:#dae2e8;font-weight:400;-webkit-text-stroke:0.3px #2d3640;">3.3k</div>
<div class="t" style="left:515.50px;top:445.00px;font-size:28px;line-height:28px;letter-spacing:0.137px;color:#8ea4b4;font-weight:400;-webkit-text-stroke:0.55px #1a1d22;">Pull requests</div>
<div class="t" style="left:778.80px;top:445.00px;font-size:28px;line-height:28px;letter-spacing:0.194px;color:#8ea4b4;font-weight:400;-webkit-text-stroke:0.55px #1a1d22;">Projects</div>
<div class="t" style="left:977.00px;top:445.00px;font-size:28px;line-height:28px;letter-spacing:-0.847px;color:#8ea4b4;font-weight:400;-webkit-text-stroke:0.55px #1a1d22;">Releases</div>
<div class="t" style="left:1183.60px;top:445.00px;font-size:28px;line-height:28px;letter-spacing:-0.881px;color:#8ea4b4;font-weight:400;-webkit-text-stroke:0.55px #1a1d22;">Packages</div>
<div class="t" style="left:1397.80px;top:445.00px;font-size:28px;line-height:28px;letter-spacing:0.184px;color:#8ea4b4;font-weight:400;-webkit-text-stroke:0.55px #1a1d22;">Wiki</div>
<div class="t" style="left:1546.20px;top:445.00px;font-size:28px;line-height:28px;letter-spacing:0.475px;color:#8ea4b4;font-weight:400;-webkit-text-stroke:0.55px #1a1d22;">Activity</div>
<div class="t" style="left:1737.70px;top:445.00px;font-size:28px;line-height:28px;letter-spacing:-0.059px;color:#8ea4b4;font-weight:400;-webkit-text-stroke:0.55px #1a1d22;">Enable more</div>
<div class="t" style="left:2089.60px;top:445.00px;font-size:28px;line-height:28px;letter-spacing:0.361px;color:#8ea4b4;font-weight:400;-webkit-text-stroke:0.55px #1a1d22;">Settings</div>
<div class="t" style="left:65.00px;top:558.00px;font-size:28px;line-height:28px;letter-spacing:-0.302px;color:#dfe5ea;font-weight:400;-webkit-text-stroke:0.55px #081824;">Labels</div>
<div class="t" style="left:208.00px;top:558.00px;font-size:28px;line-height:28px;letter-spacing:0.407px;color:#dfe5ea;font-weight:400;-webkit-text-stroke:0.55px #081824;">Milestones</div>
<div class="t" style="left:421.30px;top:558.00px;font-size:27px;line-height:27px;letter-spacing:-0.768px;color:#ffffff;font-weight:400;-webkit-text-stroke:0.55px #082337;">uBlock</div>
<div class="t" style="left:2057.00px;top:558.20px;font-size:28px;line-height:28px;letter-spacing:-0.048px;color:#ffffff;font-weight:400;">New issue</div>
<div class="t" style="left:112.00px;top:667.00px;font-size:28px;line-height:28px;letter-spacing:-0.135px;color:#dfe5ea;font-weight:400;-webkit-text-stroke:0.55px #082337;">0 Open</div>
<div class="t" style="left:312.60px;top:667.00px;font-size:28px;line-height:28px;letter-spacing:-0.520px;color:#dfe5ea;font-weight:400;-webkit-text-stroke:0.55px #081824;">0 Closed</div>
<div class="t" style="left:528.40px;top:667.00px;font-size:28px;line-height:28px;letter-spacing:0.088px;color:#dfe5ea;font-weight:400;-webkit-text-stroke:0.55px #081824;">0 All</div>
<div class="t" style="left:983.80px;top:667.00px;font-size:28px;line-height:28px;letter-spacing:0.078px;color:#dfe5ea;font-weight:400;-webkit-text-stroke:0.55px #0d1921;">Label</div>
<div class="t" style="left:1148.60px;top:667.00px;font-size:28px;line-height:28px;letter-spacing:0.542px;color:#5c6a74;font-weight:400;-webkit-text-stroke:0.55px #0d1921;">Milestone</div>
<div class="t" style="left:1370.80px;top:667.00px;font-size:28px;line-height:28px;letter-spacing:0.339px;color:#5c6a74;font-weight:400;-webkit-text-stroke:0.55px #0d1921;">Project</div>
<div class="t" style="left:1558.60px;top:667.00px;font-size:28px;line-height:28px;letter-spacing:0.966px;color:#dfe5ea;font-weight:400;-webkit-text-stroke:0.55px #0d1921;">Author</div>
<div class="t" style="left:1743.50px;top:667.00px;font-size:28px;line-height:28px;letter-spacing:-0.459px;color:#dfe5ea;font-weight:400;-webkit-text-stroke:0.55px #0d1921;">Assignee</div>
<div class="t" style="left:1953.70px;top:667.00px;font-size:28px;line-height:28px;letter-spacing:-0.477px;color:#dfe5ea;font-weight:400;-webkit-text-stroke:0.55px #0d1921;">Type</div>
<div class="t" style="left:2110.20px;top:667.00px;font-size:28px;line-height:28px;letter-spacing:0.143px;color:#dfe5ea;font-weight:400;-webkit-text-stroke:0.55px #0d1921;">Sort</div>
<div class="t" style="left:1044.40px;top:810.00px;font-size:36px;line-height:36px;letter-spacing:0.605px;color:#dce2e7;font-weight:400;">No results</div>
<div class="t" style="left:928.90px;top:884.20px;font-size:29px;line-height:29px;letter-spacing:-0.329px;color:#8ba2b2;font-weight:400;-webkit-text-stroke:0.55px #0d1921;">Try adjusting your search filters.</div>
</body></html>
